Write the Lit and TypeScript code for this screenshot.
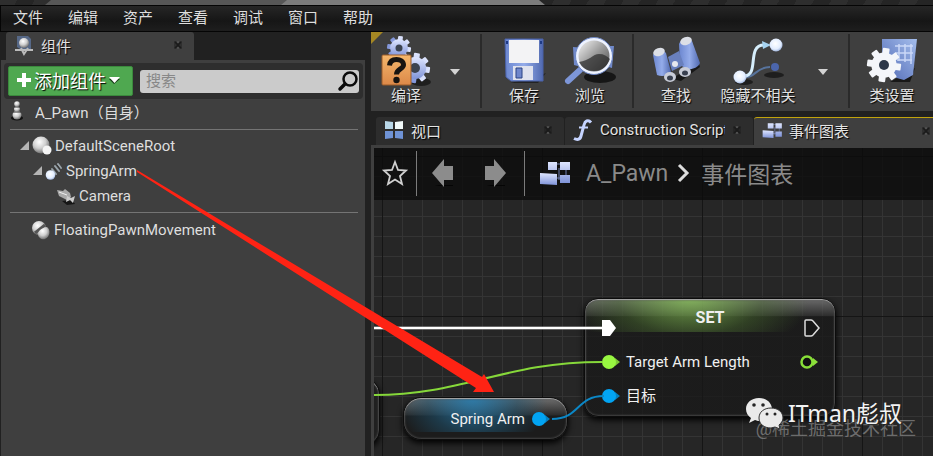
import { LitElement, html, css, svg } from "lit";
import { customElement, property } from "lit/decorators.js";

const gear = (cx: number, cy: number, r: number, fill: string, hole: string, hr: number) => svg`
  <g transform="translate(${cx} ${cy})">
    ${[0, 45, 90, 135].map((a) => svg`<rect x=${-r * 0.2} y=${-r} width=${r * 0.4} height=${r * 2} rx="1" transform="rotate(${a + 8})" fill=${fill}></rect>`)}
    <circle r=${r * 0.74} fill=${fill}></circle>
    <circle r=${hr} fill=${hole}></circle>
  </g>`;

const defs = svg`<defs>
  <linearGradient id="blue" x1="0" y1="0" x2="0" y2="1"><stop offset="0" stop-color="#dfe6ff"></stop><stop offset="1" stop-color="#7f93d8"></stop></linearGradient>
  <linearGradient id="deep" x1="0" y1="0" x2="1" y2="0"><stop offset="0" stop-color="#6b86cf"></stop><stop offset=".5" stop-color="#94acea"></stop><stop offset="1" stop-color="#5069b0"></stop></linearGradient>
  <linearGradient id="sheet" x1="0" y1="1" x2="1" y2="0"><stop offset="0" stop-color="#4f68b4"></stop><stop offset="1" stop-color="#a4bdec"></stop></linearGradient>
  <linearGradient id="orange" x1="0" y1="0" x2="0" y2="1"><stop offset="0" stop-color="#f5b76c"></stop><stop offset="1" stop-color="#dc8848"></stop></linearGradient>
  <radialGradient id="ball" cx=".4" cy=".32" r=".75"><stop offset="0" stop-color="#fff"></stop><stop offset=".5" stop-color="#cfcfcf"></stop><stop offset="1" stop-color="#5c5c5c"></stop></radialGradient>
  <radialGradient id="bright" cx=".45" cy=".4" r=".7"><stop offset="0" stop-color="#fff"></stop><stop offset=".6" stop-color="#e2edff"></stop><stop offset="1" stop-color="#7b95c8"></stop></radialGradient>
  <linearGradient id="glass" x1="0" y1="0" x2="1" y2="1"><stop offset="0" stop-color="#fff"></stop><stop offset=".5" stop-color="#999"></stop><stop offset="1" stop-color="#444"></stop></linearGradient>
</defs>`;

const blocks = svg`<path d="M13 4h10M20 8v12M27 8v8M16 18h8" stroke="#7381b4"></path><path d="M9 2h9v8H9zM21 2h10v8H21zM21 15h10v8H21z" fill="url(#blue)"></path><path d="M1 13l17 1v11L1 24z" fill="url(#blue)"></path>`;

const icons: Record<string, [number, number, unknown]> = {
  compile: [56, 52, svg`
    <ellipse cx="43" cy="47" rx="10" ry="4" fill="#111" opacity=".7"></ellipse>
    ${gear(21, 13, 12, "url(#blue)", "#3c4350", 3.5)}
    ${gear(37, 33, 15, "url(#blue)", "#3c4350", 5)}
    <rect x="4" y="20" width="29" height="30" rx="1" fill="url(#orange)" stroke="#9c5c2b"></rect>
    <path d="M11.500 30.500C12 26 15 24.500 18.500 24.500S25.500 26 25.500 30C25.500 34 18.500 34 18.500 39.500" fill="none" stroke="#171310" stroke-width="5"></path>
    <circle cx="18.500" cy="45" r="3.200" fill="#171310"></circle>`],
  save: [56, 52, svg`
    <path d="M40 42l10-4-8 10H14z" fill="#111" opacity=".6"></path>
    <path d="M9 4h38v42H15l-5-4z" fill="url(#deep)" stroke="#4a62ab"></path>
    <path d="M13 5h30v23H13z" fill="#f3f3f5"></path>
    <path d="M17 31h20v14H17z" fill="#dfe2ee"></path>
    <path d="M20 33h6v10h-6z" fill="#6f86cb" stroke="#2a4284"></path>
    <path d="M10 6h2v3h-2zM44 6h2v3h-2z" fill="#1f3b86"></path>`],
  browse: [56, 52, svg`
    <ellipse cx="38" cy="42" rx="16" ry="6" fill="#090909" opacity=".75"></ellipse>
    <path d="M11 12l12 1v20l-11-3zM40 11h12l-2 22-10-3z" fill="#7089ca"></path>
    <path d="M6 46l12-11" stroke="#7d96d8" stroke-width="6" stroke-linecap="round"></path>
    <circle cx="32" cy="21" r="17" fill="url(#glass)" stroke="#eef3ff" stroke-width="3"></circle>
    <path d="M17 27c10-1 14-8 20-8 5 0 8 2 11 5-3 8-9 12-16 12-7 0-12-3-15-9z" fill="#292929" opacity=".7"></path>
    <circle cx="32" cy="21" r="18.500" fill="none" stroke="#6d86c4"></circle>`],
  find: [56, 52, svg`
    <path d="M24 44l26-18 2 6-19 14z" fill="#080808" opacity=".7"></path>
    <path d="M31 9c2-5 10-7 13-3l8 22c-2 5-9 7-13 6l-7-4z" fill="url(#deep)"></path>
    <path d="M5 20c2-5 10-6 13-2l5 19c-3 4-9 5-14 3z" fill="url(#deep)"></path>
    <path d="M20 22l11-6 5 14-12 6z" fill="#6980be"></path>
    <ellipse cx="38" cy="6" rx="6" ry="4" fill="#dcdfe6" transform="rotate(-20 38 6)"></ellipse>
    <ellipse cx="11" cy="17" rx="6" ry="4" fill="#dcdfe6" transform="rotate(-20 11 17)"></ellipse>
    <circle cx="27" cy="29" r="3" fill="#e6e8ef"></circle>
    <ellipse cx="37" cy="37" rx="6" ry="5" fill="#c9cdd8"></ellipse><ellipse cx="37" cy="38" rx="3" ry="2.500" fill="#39404f"></ellipse>
    <ellipse cx="22" cy="42" rx="6" ry="5" fill="#c9cdd8"></ellipse><ellipse cx="22" cy="43" rx="3" ry="2.500" fill="#39404f"></ellipse>`],
  hide: [56, 52, svg`
    <ellipse cx="44" cy="40" rx="10" ry="3" fill="#111" opacity=".7"></ellipse>
    <ellipse cx="14" cy="47" rx="9" ry="3" fill="#111" opacity=".7"></ellipse>
    <path d="M16 42c10 0 10-10 24-10" stroke="#57739c" stroke-width="2" fill="none"></path>
    <path d="M14 41C30 41 16 10 34 10" stroke="#d6eefc" stroke-width="3" fill="none"></path>
    <path d="M32 6l9 4-8 4z" fill="#a6d3f0"></path>
    <circle cx="46" cy="10" r="6.500" fill="url(#bright)"></circle>
    <circle cx="10" cy="42" r="6.500" fill="url(#bright)"></circle>
    <circle cx="45" cy="32" r="4" fill="#4b65ab"></circle>`],
  classes: [56, 52, svg`
    <path d="M42 38l9-5-5 14H26z" fill="#080808" opacity=".7"></path>
    <path d="M18 4h35l-4 36-9 5-22-6z" fill="url(#sheet)"></path>
    <path d="M31 11h18M31 18h18M33 25h15M35 9v17M41 9v18M47 9v20" stroke="#dbe6ff" stroke-width="1.500" opacity=".8"></path>
    ${gear(20, 30, 17, "#f4f6fa", "#2b3648", 5)}`],
  viewport: [20, 20, svg`<path d="M1 1l8 1v7H1z" fill="#b9d7e8"></path><path d="M11 2l8-1v8h-8z" fill="#f2fafa"></path><path d="M1 11h8v7l-8 1zM11 11h8v8l-8-1z" fill="#6f93d6"></path>`],
  graph: [32, 26, blocks],
  graphSmall: [20, 18, svg`<g transform="scale(.64)">${blocks}</g>`],
  func: [20, 22, svg`<path d="M18 3.500C15 0 12 2 11 6L8 17c-1 4-4 4-7 2.500" stroke="#c6d4ff" stroke-width="3" fill="none"></path><path d="M6 8.500h9" stroke="#c6d4ff" stroke-width="2"></path>`],
  comp: [20, 20, svg`<path d="M3 1h11l3 3v10H6l-3-2z" fill="#566887"></path><path d="M1 15h18M7 13l3 6 4-6" stroke="#bbb" stroke-width="2" fill="none"></path><circle cx="10" cy="8" r="5" fill="url(#ball)"></circle>`],
  pawn: [14, 20, svg`<ellipse cx="7" cy="17" rx="6" ry="2.500" fill="#111"></ellipse><circle cx="7" cy="14" r="4.500" fill="url(#ball)"></circle><path d="M3 11h8" stroke="#333"></path><circle cx="7" cy="8" r="3" fill="url(#ball)"></circle><path d="M4 6h6" stroke="#333"></path><circle cx="7" cy="3" r="2.800" fill="url(#ball)"></circle>`],
  scene: [20, 20, svg`<circle cx="9" cy="9" r="8.500" fill="url(#ball)"></circle><circle cx="15" cy="14" r="4.500" fill="#f5f5f5"></circle>`],
  spring: [18, 18, svg`<path d="M7 7l4 5M10 4l4 5M13 2l3 4" stroke="#9aa4ab" stroke-width="2" stroke-linecap="round"></path><path d="M9 6l3 4M12 3l3 4" stroke="#333"></path><circle cx="5.500" cy="13" r="4.800" fill="url(#bright)"></circle>`],
  camera: [20, 18, svg`<path d="M6 14l10-1 3 4-8 1z" fill="#161616"></path><path d="M1 3l6 1 2-2 5 4 1 4-4 3-8-4z" fill="#aaa"></path><path d="M11 9l4 2 4-2-2 7-3-3-4 2z" fill="#ccc"></path><path d="M3 5l8 3" stroke="#eee"></path>`],
  move: [20, 20, svg`<circle cx="8" cy="8" r="7" fill="url(#ball)"></circle><path d="M4 13L14 5" stroke="#555" stroke-width="3"></path><path d="M7 14c0-4 6-7 9-7 4 3 3 10-2 12-3 1-7-1-7-5z" fill="url(#ball)"></path>`],
  star: [26, 26, svg`<path d="M13 2l3 8 8 .5-6 5.500 2 8-7-4.500L6 24l2-8-6-5.500 8-.5z" fill="none" stroke="#d0d0d0" stroke-width="1.800"></path>`],
  back: [24, 28, svg`<path d="M4 26h18v1H8z" fill="#050505"></path><path d="M1 14L13 0v7h9v14h-9v7z" fill="#8c8c8c"></path>`],
  next: [24, 28, svg`<path d="M4 26h18v1H8z" fill="#050505"></path><path d="M23 14L11 0v7H2v14h9v7z" fill="#8c8c8c"></path>`],
  chevron: [14, 20, svg`<path d="M2 2l8 8-8 8" fill="none" stroke="#ddd" stroke-width="3"></path>`],
  search: [20, 20, svg`<circle cx="12" cy="8" r="6.500" fill="none" stroke="#0b0b0b" stroke-width="2.500"></circle><path d="M7 13l-5 5" stroke="#0b0b0b" stroke-width="3.500" stroke-linecap="round"></path>`],
  close: [10, 10, svg`<path d="M1 1h8v8H1z" fill="#1c1c1c" opacity=".45"></path><path d="M2 2l6 6M8 2l-6 6" stroke="#1b1b1b" stroke-width="1.500"></path><path d="M4 1l1 2 1-2M4 9l1-2 1 2" stroke="#575757" fill="none"></path>`],
  plus: [14, 14, svg`<path d="M5 0h4v5h5v4H9v5H5V9H0V5h5z" fill="#fff"></path>`],
  caret: [10, 6, svg`<path d="M0 0h10L5 6z" fill="#d4d4d4"></path>`],
  caretWhite: [11, 7, svg`<path d="M0 2l5 5 6-5" fill="#163a17"></path><path d="M0 0h11L5.500 6z" fill="#fff"></path>`],
  expand: [9, 9, svg`<path d="M9 0v9H0z" fill="#b5b5b5"></path>`],
  execIn: [16, 18, svg`<path d="M1 1h8l6 8-6 8H1z" fill="#fff"></path>`],
  execOut: [16, 18, svg`<path d="M2 1h5q1 0 2 1l6 7-6 7q-1 1-2 1H2q-1 0-1-1V2q0-1 1-1z" fill="#161616" stroke="#ddd" stroke-width="1.500"></path>`],
  green: [20, 16, svg`<path d="M14 4l5 4-5 4z" fill="#7cc935"></path><circle cx="8" cy="8" r="7" fill="#98f741"></circle>`],
  blue: [20, 16, svg`<path d="M14 4l5 4-5 4z" fill="#0580c0"></path><circle cx="8" cy="8" r="7" fill="#02a4f3"></circle>`],
  ring: [20, 16, svg`<path d="M14 4l5 4-5 4z" fill="#8ee03c"></path><circle cx="8" cy="8" r="5.500" fill="#111" stroke="#88df38" stroke-width="2.500"></circle>`],
  wechat: [38, 32, svg`<path d="M14 1C6 1 1 6 1 12c0 4 2 7 5 9l-2 5 6-3c2 1 4 1 6 1-1-8 4-13 11-13C26 5 21 1 14 1z" fill="#eaeaea"></path><path d="M26 11c-7 0-12 4-12 10s5 10 12 10l4-1 5 2-1-4c2-2 4-4 4-7 0-6-5-10-12-10z" fill="#eaeaea" stroke="#333"></path><g fill="#252525"><circle cx="9" cy="8" r="1.800"></circle><circle cx="18" cy="8" r="1.800"></circle><circle cx="22" cy="17" r="1.500"></circle><circle cx="30" cy="17" r="1.500"></circle></g>`],
};

@customElement("ui-icon")
class UiIcon extends LitElement {
  @property() name = "";
  static styles = css`:host { display: inline-flex; flex: none; } svg { display: block; overflow: visible; }`;
  render() {
    const [w, h, art] = icons[this.name];
    return html`<svg width=${w} height=${h} viewBox="0 0 ${w} ${h}" aria-hidden="true">${defs}${art}</svg>`;
  }
}

@customElement("tool-button")
class ToolButton extends LitElement {
  @property() icon = "";
  @property() label = "";
  static styles = css`
    :host { display: block; flex: none; min-width: 66px; }
    button { all: unset; box-sizing: border-box; width: 100%; display: flex; flex-direction: column; align-items: center; padding-top: 3px; }
    span { font-size: 15px; line-height: 18px; color: #e2e2e2; text-shadow: 1px 1px 1px #000; white-space: nowrap; }
  `;
  render() {
    return html`<button><ui-icon name=${this.icon}></ui-icon><span>${this.label}</span></button>`;
  }
}

@customElement("components-panel")
class ComponentsPanel extends LitElement {
  static styles = css`
    :host { display: flex; flex-direction: column; }
    .tab { width: 188px; height: 28px; box-sizing: border-box; margin-left: 5px; padding: 0 11px 2px 8px; display: flex; align-items: center; gap: 7px; background: #3f3f3f; border-radius: 3px 3px 0 0; font-size: 15px; color: #e2e2e2; text-shadow: 1px 1px 1px #000; }
    .grow { flex: 1; }
    .panel { flex: 1; background: #3f3f3f; padding: 3px 2px; }
    .tools { display: flex; align-items: center; gap: 7px; padding: 3px 4px; background: #2e2e2e; border-radius: 4px; margin-left: 1px; }
    .add { all: unset; box-sizing: border-box; flex: none; height: 30px; width: 125px; display: flex; align-items: center; padding: 0 0 2px 8px; gap: 3px; background: #4fa850; border: 1px solid #3b8a3d; border-radius: 2px; font-size: 18px; color: #fff; text-shadow: 1px 1px 1px #000; }
    .search { flex: 1; min-width: 0; height: 23px; display: flex; align-items: center; background: #cbcbcb; border-radius: 3px; padding: 0 1px 0 6px; }
    input { all: unset; flex: 1; min-width: 0; font-size: 15px; line-height: 22px; color: #222; }
    input::placeholder { color: #888; }
    ul { list-style: none; margin: 0 5px 0 7px; padding: 0; font-size: 15px; color: #dedede; }
    li { display: flex; align-items: center; height: 25px; gap: 3px; white-space: nowrap; }
    .self { gap: 11px; height: 24px; margin-bottom: 6px; }
    .line { border-top: 1px solid #747474; }
    .root { padding: 3px 0 0 10px; }
    .child { padding-left: 23px; }
    .leaf { padding-left: 46px; }
    .move { padding: 4px 0 0 21px; margin-top: 4px; }
  `;
  render() {
    return html`
      <div class="tab"><ui-icon name="comp"></ui-icon><span>组件</span><span class="grow"></span><ui-icon name="close"></ui-icon></div>
      <div class="panel">
        <div class="tools">
          <button class="add"><ui-icon name="plus"></ui-icon><span>添加组件</span><ui-icon name="caretWhite"></ui-icon></button>
          <label class="search"><input type="text" aria-label="搜索" placeholder="搜索" /><ui-icon name="search"></ui-icon></label>
        </div>
        <ul>
          <li class="self"><ui-icon name="pawn"></ui-icon>A_Pawn（自身）</li>
          <li class="line root"><ui-icon name="expand"></ui-icon><ui-icon name="scene"></ui-icon>DefaultSceneRoot</li>
          <li class="child"><ui-icon name="expand"></ui-icon><ui-icon name="spring"></ui-icon>SpringArm</li>
          <li class="leaf"><ui-icon name="camera"></ui-icon>Camera</li>
          <li class="line move"><ui-icon name="move"></ui-icon>FloatingPawnMovement</li>
        </ul>
      </div>`;
  }
}

@customElement("event-graph")
class EventGraph extends LitElement {
  static styles = css`
    :host {
      display: block; position: relative; overflow: hidden; background-color: #262626; color: #f0f0f0; font-size: 15px;
      background-image: linear-gradient(90deg, #151515 1px, transparent 1px), linear-gradient(#151515 1px, transparent 1px), linear-gradient(90deg, #343434 1px, transparent 1px), linear-gradient(#343434 1px, transparent 1px);
      background-size: 160px 160px, 160px 160px, 20px 20px, 20px 20px;
      background-position: 8px 8px;
    }
    .crumbs { display: flex; align-items: center; box-sizing: border-box; height: 52px; background: rgba(10, 10, 10, .76); padding: 0 0 2px 8px; font-size: 23px; color: #8a8a8a; white-space: nowrap; }
    .crumbs button { all: unset; display: flex; }
    .bar { width: 1px; height: 45px; background: #7c7c7c; }
    .bar.first { margin: 0 14px 0 8px; }
    .bar.second { margin: 0 14px 0 17px; }
    .crumbs .next { margin-left: 28px; }
    .crumbs .name { margin: 0 9px 0 15px; }
    .crumbs .here { margin-left: 10px; }
    .wires { position: absolute; left: 0; top: 0; width: 559px; height: 308px; pointer-events: none; }
    .node { position: absolute; box-sizing: border-box; border: 1px solid #0c0c0c; box-shadow: inset 0 1px 1px #aaa, inset 0 0 2px 1px #444, 0 3px 6px #000; }
    .set { left: 210px; top: 150px; width: 252px; height: 119px; border-radius: 14px; background: radial-gradient(ellipse 120px 60px at 42% 0, rgba(140, 200, 90, .75), rgba(80, 120, 50, .4) 60%, transparent) no-repeat 0 0 / 100% 33px, linear-gradient(rgba(130, 130, 130, .75), rgba(50, 50, 50, .6) 17px, rgba(24, 24, 24, .75) 18px, rgba(24, 24, 24, .75)); padding: 5px 12px 0 16px; }
    .title { text-align: center; font-size: 16px; font-weight: 700; line-height: 28px; margin-right: 4px; }
    .exec, .pin { display: flex; align-items: center; }
    .exec { height: 0; justify-content: space-between; margin: -4px 3px 17px 0; }
    .pin { height: 34px; gap: 5px; }
    .pin ui-icon:last-child:not(:first-child) { margin: 0 4px 0 auto; }
    .cjk { padding-bottom: 4px; }
    .spring { left: 29px; top: 249px; width: 165px; height: 43px; border-radius: 18px; background: radial-gradient(ellipse 75px 60px at 42% 0, rgba(40, 125, 175, .9), rgba(30, 85, 115, .5) 60%, transparent) no-repeat 0 0 / 100% 34px, linear-gradient(#707070, #2b2b2b 17px, #1c1c1c 18px); display: flex; align-items: center; justify-content: flex-end; gap: 6px; padding-right: 16px; }
    .edge { left: -60px; top: 230px; width: 66px; height: 68px; border-radius: 16px; background: #202020; }
  `;
  render() {
    return html`
      <nav class="crumbs">
        <button aria-label="收藏"><ui-icon name="star"></ui-icon></button><span class="bar first"></span>
        <button aria-label="后退"><ui-icon name="back"></ui-icon></button>
        <button class="next" aria-label="前进"><ui-icon name="next"></ui-icon></button><span class="bar second"></span>
        <ui-icon name="graph"></ui-icon><span class="name">A_Pawn</span><ui-icon name="chevron"></ui-icon><span class="here">事件图表</span>
      </nav>
      <div class="node edge"></div>
      <div class="node set">
        <div class="title">SET</div>
        <div class="exec"><ui-icon name="execIn"></ui-icon><ui-icon name="execOut"></ui-icon></div>
        <div class="pin"><ui-icon name="green"></ui-icon><span>Target Arm Length</span><ui-icon name="ring"></ui-icon></div>
        <div class="pin"><ui-icon name="blue"></ui-icon><span class="cjk">目标</span></div>
      </div>
      <div class="node spring"><span>Spring Arm</span><ui-icon name="blue"></ui-icon></div>
      <svg class="wires" viewBox="0 0 559 308" fill="none">
        <path d="M0 180H228" stroke="#a5a5a5" stroke-width="3"></path><path d="M0 180H228" stroke="#fff" stroke-width="2"></path>
        <path d="M0 247C90 247 130 214 228 214" stroke="#86d83a" stroke-width="2"></path>
        <path d="M178 271C206 271 202 248 230 248" stroke="#0b87c6" stroke-width="2"></path>
      </svg>`;
  }
}

@customElement("app-root")
class AppRoot extends LitElement {
  static styles = css`
    :host { position: relative; display: flex; flex-direction: column; min-height: 100vh; overflow: hidden; background: #212121; font-family: Roboto, "Noto Sans CJK SC", sans-serif; }
    .strip { display: flex; height: 5px; background: repeating-linear-gradient(120deg, #2e2e2e 0 15px, #252525 15px 30px); padding-left: 45px; }
    .doc { width: 243px; background: #575757; clip-path: polygon(6px 0, 100% 0, 100% 100%, 0 100%); }
    .doc.active { width: 264px; background: #7c7c7c; margin-left: -7px; clip-path: polygon(6px 0, 258px 0, 100% 100%, 0 100%); }
    .menu { display: flex; gap: 25px; height: 25px; align-items: center; padding-left: 12px; border: solid #050505; border-width: 1px 0 1px 1px; background: linear-gradient(#262626, #161616 60%, #1e1e1e); }
    .menu button { all: unset; font-size: 15px; line-height: 24px; padding-bottom: 1px; color: #dedede; }
    .main { flex: 1; display: grid; grid-template-columns: minmax(0, 364px) minmax(0, 1fr); gap: 6px; padding-left: 1px; }
    .right { display: flex; flex-direction: column; min-width: 0; }
    .toolbar { position: relative; display: flex; height: 79px; box-sizing: border-box; background: #3f3f3f; padding-left: 2px; overflow: hidden; }
    .toolbar::before { content: ""; position: absolute; left: 0; top: 0; width: 12px; height: 12px; background: #a58723; clip-path: polygon(0 0, 100% 0, 0 100%); }
    .drop { all: unset; width: 32px; flex: none; display: flex; align-items: center; justify-content: center; }
    .sep { flex: none; width: 2px; margin: 2px 9px 3px; background: #2a2a2a; }
    .wide { min-width: 98px; }
    .tabs { display: flex; gap: 1px; margin: 6px 0 0 5px; height: 28px; }
    .tab { box-sizing: border-box; flex: none; width: 188px; display: flex; align-items: center; gap: 7px; padding: 0 11px 2px 8px; background: #2d2d2d; border-radius: 3px 3px 0 0; color: #e4e4e4; font-size: 15px; text-shadow: 1px 1px 1px #000; white-space: nowrap; }
    .tab span { flex: 1; overflow: hidden; }
    .tab.on { background: #3f3f3f; border-top: 1px solid #c2a40c; }
    .frame { flex: 1; display: grid; border-left: 3px solid #3f3f3f; border-top: 3px solid #3f3f3f; }
    .arrow { position: absolute; left: 0; top: 0; width: 933px; height: 456px; pointer-events: none; }
    .sign { position: absolute; right: 17px; bottom: 15px; display: flex; flex-direction: column; align-items: flex-end; color: #f3f3f3; white-space: nowrap; }
    .author { display: flex; align-items: center; gap: 5px; font-family: "Noto Sans", "Noto Sans CJK SC", sans-serif; font-size: 23px; line-height: 32px; margin-right: 14px; text-shadow: 1px 1px 1px #222; z-index: 1; }
    .site { font-size: 18px; line-height: 24px; margin-top: -12px; color: rgba(170, 170, 170, .55); }
  `;
  render() {
    return html`
      <div class="strip"><div class="doc"></div><div class="doc active"></div></div>
      <nav class="menu">${["文件", "编辑", "资产", "查看", "调试", "窗口", "帮助"].map((t) => html`<button>${t}</button>`)}</nav>
      <div class="main">
        <components-panel></components-panel>
        <div class="right">
          <div class="toolbar">
            <tool-button icon="compile" label="编译"></tool-button>
            <button class="drop" aria-label="编译选项"><ui-icon name="caret"></ui-icon></button>
            <span class="sep"></span>
            <tool-button icon="save" label="保存"></tool-button>
            <tool-button icon="browse" label="浏览"></tool-button>
            <span class="sep"></span>
            <tool-button icon="find" label="查找"></tool-button>
            <tool-button class="wide" icon="hide" label="隐藏不相关"></tool-button>
            <button class="drop" aria-label="隐藏选项"><ui-icon name="caret"></ui-icon></button>
            <span class="sep"></span>
            <tool-button icon="classes" label="类设置"></tool-button>
          </div>
          <div class="tabs">
            <div class="tab"><ui-icon name="viewport"></ui-icon><span>视口</span><ui-icon name="close"></ui-icon></div>
            <div class="tab"><ui-icon name="func"></ui-icon><span>Construction Script</span><ui-icon name="close"></ui-icon></div>
            <div class="tab on"><ui-icon name="graphSmall"></ui-icon><span>事件图表</span><ui-icon name="close"></ui-icon></div>
          </div>
          <div class="frame"><event-graph></event-graph></div>
        </div>
      </div>
      <svg class="arrow" viewBox="0 0 933 456" aria-hidden="true"><path d="M137 170L482 377L484 374L494 392L473 392L476 388L137 172Z" fill="#ff2314"></path></svg>
      <div class="sign"><div class="author"><ui-icon name="wechat"></ui-icon>ITman彪叔</div><div class="site">@稀土掘金技术社区</div></div>`;
  }
}
